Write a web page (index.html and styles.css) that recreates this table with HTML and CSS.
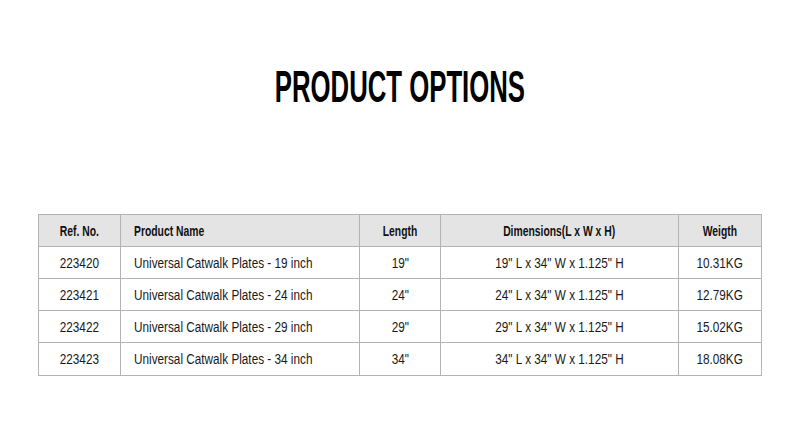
FILE: index.html
```html
<!DOCTYPE html>
<html>
<head>
<meta charset="utf-8">
<link rel="stylesheet" href="styles.css">
</head>
<body>
<div class="page">
  <h1 class="title"><span class="title-text">PRODUCT OPTIONS</span></h1>
  <table class="options">
    <colgroup>
      <col class="c-ref"><col class="c-name"><col class="c-len"><col class="c-dim"><col class="c-wt">
    </colgroup>
    <thead>
      <tr><th><span class="t">Ref. No.</span></th><th class="left"><span class="t">Product Name</span></th><th><span class="t">Length</span></th><th><span class="t">Dimensions(L x W x H)</span></th><th><span class="t">Weigth</span></th></tr>
    </thead>
    <tbody>
      <tr><td><span class="t">223420</span></td><td class="left"><span class="t">Universal Catwalk Plates - 19 inch</span></td><td><span class="t">19"</span></td><td><span class="t">19" L x 34" W x 1.125" H</span></td><td><span class="t">10.31KG</span></td></tr>
      <tr><td><span class="t">223421</span></td><td class="left"><span class="t">Universal Catwalk Plates - 24 inch</span></td><td><span class="t">24"</span></td><td><span class="t">24" L x 34" W x 1.125" H</span></td><td><span class="t">12.79KG</span></td></tr>
      <tr><td><span class="t">223422</span></td><td class="left"><span class="t">Universal Catwalk Plates - 29 inch</span></td><td><span class="t">29"</span></td><td><span class="t">29" L x 34" W x 1.125" H</span></td><td><span class="t">15.02KG</span></td></tr>
      <tr><td><span class="t">223423</span></td><td class="left"><span class="t">Universal Catwalk Plates - 34 inch</span></td><td><span class="t">34"</span></td><td><span class="t">34" L x 34" W x 1.125" H</span></td><td><span class="t">18.08KG</span></td></tr>
    </tbody>
  </table>
</div>
</body>
</html>
```
FILE: styles.css
```css
html, body { margin: 0; padding: 0; background: #fff; }
.page {
  width: 800px;
  height: 432px;
  display: flex;
  flex-direction: column;
  align-items: center;
  padding-top: 62px;
  box-sizing: border-box;
}
.title {
  margin: 0;
  width: 100%;
  text-align: center;
  font-family: "Liberation Sans", Arial, sans-serif;
  font-weight: bold;
  font-size: 44px;
  line-height: 50px;
  color: #000;
}
.title-text {
  display: inline-block;
  transform: scaleX(0.585);
  transform-origin: center;
  white-space: nowrap;
}
.options {
  margin-top: 102px;
  width: 723px;
  table-layout: fixed;
  border-collapse: collapse;
  font-family: "Liberation Sans", Arial, sans-serif;
  color: #1a1a1a;
}
.c-ref { width: 82px; }
.c-name { width: 239px; }
.c-len { width: 81px; }
.c-dim { width: 238px; }
.c-wt { width: 83px; }
.options th, .options td {
  border: 1px solid #b3b3b3;
  text-align: center;
  padding: 0;
  white-space: nowrap;
}
.options .t {
  display: inline-block;
  transform: scaleX(0.84);
  transform-origin: center;
}
.options th {
  height: 31px;
  background: #e4e4e4;
  font-weight: bold;
  font-size: 15px;
  color: #111;
}
.options th .t { transform: scaleX(0.69); }
.options td {
  height: 31px;
  font-size: 14px;
}
.options tbody tr:last-child td { height: 32px; }
.options .left { text-align: left; padding-left: 13px; }
.options .left .t { transform-origin: left center; }
```
